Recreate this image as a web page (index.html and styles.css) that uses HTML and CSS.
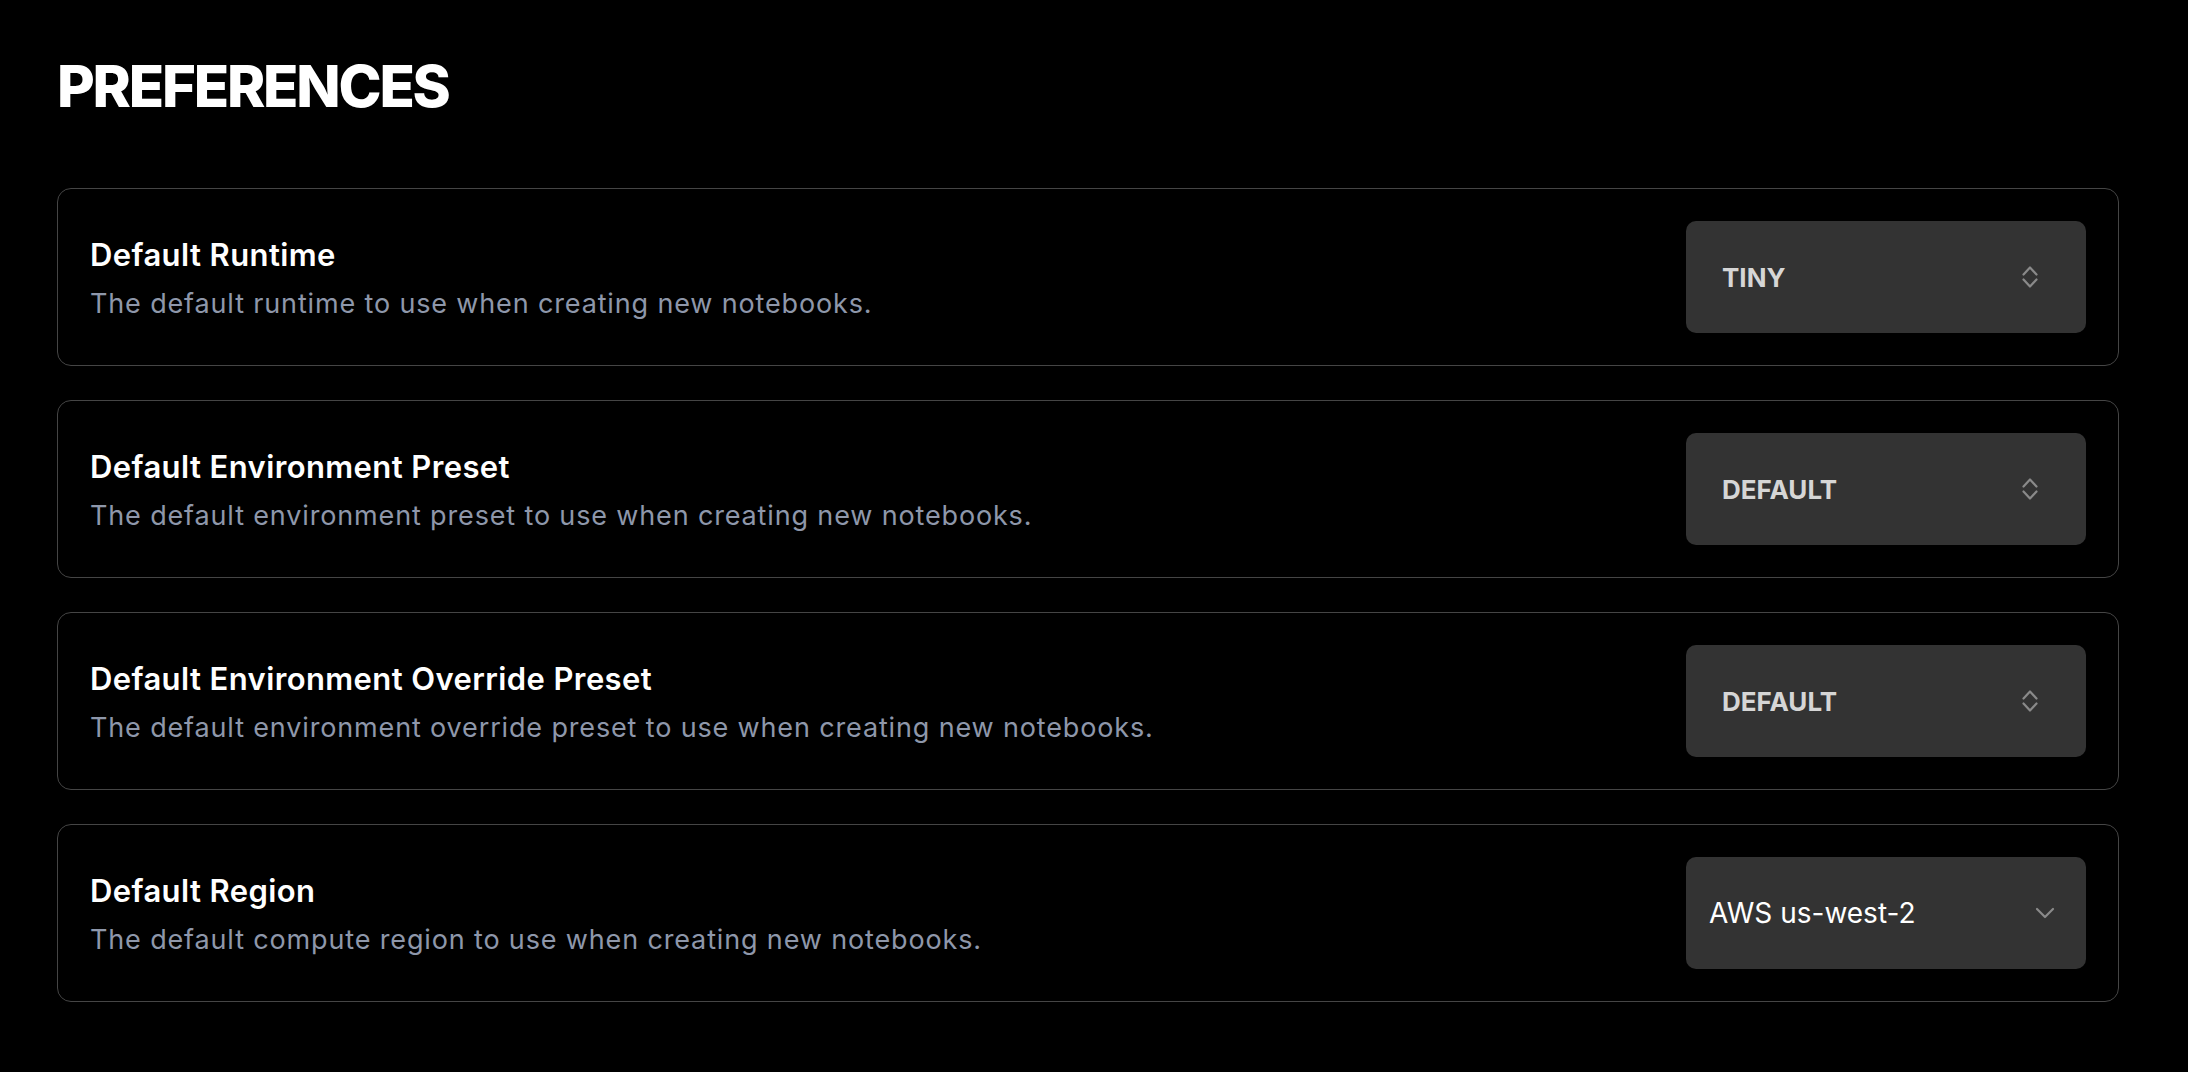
FILE: index.html
```html
<!DOCTYPE html>
<html lang="en">
<head>
<meta charset="utf-8">
<title>Preferences</title>
<link rel="stylesheet" href="styles.css">
</head>
<body>
<main class="page">
  <h1 class="title">PREFERENCES</h1>
  <section class="list">
    <div class="card">
      <div class="text">
        <div class="label">Default Runtime</div>
        <div class="desc">The default runtime to use when creating new notebooks.</div>
      </div>
      <div class="select mono">
        <span class="value">TINY</span>
        <svg class="updown" width="16" height="24" viewBox="0 0 16 24" fill="none" stroke="currentColor" stroke-width="2.2" stroke-linecap="round" stroke-linejoin="round"><path d="M1.5 9.5 L8 2.5 L14.5 9.5"/><path d="M1.5 14.5 L8 21.5 L14.5 14.5"/></svg>
      </div>
    </div>
    <div class="card">
      <div class="text">
        <div class="label">Default Environment Preset</div>
        <div class="desc">The default environment preset to use when creating new notebooks.</div>
      </div>
      <div class="select mono">
        <span class="value">DEFAULT</span>
        <svg class="updown" width="16" height="24" viewBox="0 0 16 24" fill="none" stroke="currentColor" stroke-width="2.2" stroke-linecap="round" stroke-linejoin="round"><path d="M1.5 9.5 L8 2.5 L14.5 9.5"/><path d="M1.5 14.5 L8 21.5 L14.5 14.5"/></svg>
      </div>
    </div>
    <div class="card">
      <div class="text">
        <div class="label">Default Environment Override Preset</div>
        <div class="desc">The default environment override preset to use when creating new notebooks.</div>
      </div>
      <div class="select mono">
        <span class="value">DEFAULT</span>
        <svg class="updown" width="16" height="24" viewBox="0 0 16 24" fill="none" stroke="currentColor" stroke-width="2.2" stroke-linecap="round" stroke-linejoin="round"><path d="M1.5 9.5 L8 2.5 L14.5 9.5"/><path d="M1.5 14.5 L8 21.5 L14.5 14.5"/></svg>
      </div>
    </div>
    <div class="card">
      <div class="text">
        <div class="label">Default Region</div>
        <div class="desc">The default compute region to use when creating new notebooks.</div>
      </div>
      <div class="select region">
        <span class="value">AWS us-west-2</span>
        <svg class="chev" width="20" height="12" viewBox="0 0 20 12" fill="none" stroke="currentColor" stroke-width="2.2" stroke-linecap="round" stroke-linejoin="round"><path d="M2 2 L10 10 L18 2"/></svg>
      </div>
    </div>
  </section>
</main>
</body>
</html>
```

FILE: styles.css
```css
* { box-sizing: border-box; }
html, body { margin: 0; padding: 0; background: #000; }
body {
  font-family: Inter, "Liberation Sans", sans-serif;
  color: #fff;
  height: 1072px;
  overflow: hidden;
}
.page {
  padding: 51px 0 0 57px;
  width: 2119px;
}
.title {
  margin: 0;
  font-size: 58px;
  line-height: 70px;
  font-weight: 800;
  letter-spacing: -2.2px;
  color: #fff;
}
.list {
  margin-top: 67px;
  display: flex;
  flex-direction: column;
  gap: 34px;
}
.card {
  border: 1px solid #454545;
  border-radius: 14px;
  padding: 32px;
  display: flex;
  align-items: center;
  justify-content: space-between;
}
.text { display: flex; flex-direction: column; gap: 15px; padding-top: 3px; }
.label {
  font-size: 31px;
  line-height: 36px;
  font-weight: 600;
  letter-spacing: 0.4px;
  color: #fff;
}
.desc {
  font-size: 27px;
  line-height: 32px;
  font-weight: 400;
  letter-spacing: 0.85px;
  color: #8e97aa;
}
.select {
  width: 400px;
  height: 112px;
  background: #333333;
  border-radius: 10px;
  display: flex;
  align-items: center;
  justify-content: space-between;
}
.select.mono { padding: 0 48px 0 36px; }
.select.mono .value {
  font-size: 26px;
  font-weight: 700;
  color: #d6d6d6;
}
.select.region { padding: 0 31px 0 23px; }
.select.region .value {
  font-size: 28px;
  font-weight: 400;
  color: #fff;
}
.updown, .chev { color: #8a8a8a; display: block; }
```
